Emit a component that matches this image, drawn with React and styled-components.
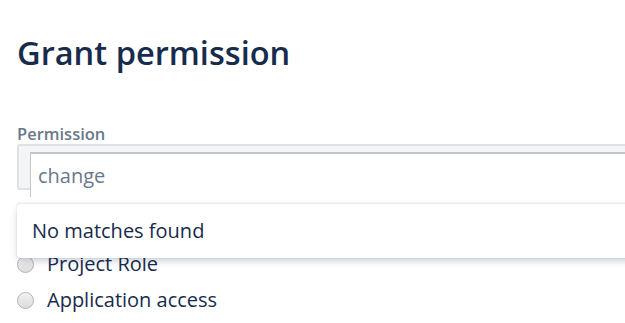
import React from 'react';
import styled, {createGlobalStyle} from 'styled-components';

const GlobalStyle = createGlobalStyle`
  html, body {
    margin: 0;
    padding: 0;
    background: #fff;
  }
  body {
    font-family: "Open Sans", "Noto Sans", Arial, sans-serif;
    color: #172b4d;
  }
`;

const Page = styled.div`
  width: 625px;
  height: 323px;
  overflow: hidden;
  padding-left: 17px;
  box-sizing: border-box;
`;

const Title = styled.h1`
  margin: 33px 0 0;
  font-size: 32.6px;
  line-height: 40px;
  font-weight: 600;
  color: #172b4d;
`;

const Field = styled.div`
  position: relative;
  margin-top: 52px;
`;

const Label = styled.label`
  display: block;
  font-size: 16.5px;
  line-height: 18px;
  font-weight: 600;
  color: #6b778c;
  margin-bottom: 1px;
`;

const SelectBox = styled.div`
  box-sizing: border-box;
  height: 46px;
  width: 640px;
  padding: 6px 0 0 11px;
  background: #f4f5f7;
  border: 2px solid #dfe1e6;
  border-right: none;
  border-radius: 3px 0 0 3px;
`;

const SearchInput = styled.div`
  box-sizing: border-box;
  height: 45px;
  padding: 10px 0 0 7px;
  background: #fff;
  border-top: 2px solid #c1c7d0;
  border-left: 1px solid #c1c7d0;
  font-size: 20px;
  line-height: 24px;
  color: #6b778c;
`;

// dropdown menu lies over the radio list
const Menu = styled.div`
  position: absolute;
  top: 78px;
  left: 0;
  width: 640px;
  height: 55px;
  box-sizing: border-box;
  padding: 15px 0 0 15px;
  background: #fff;
  border-top: 1px solid #ebecf0;
  border-radius: 3px 0 0 3px;
  box-shadow: 0 4px 8px -2px rgba(9, 30, 66, 0.25), 0 0 1px rgba(9, 30, 66, 0.31);
  font-size: 20px;
  line-height: 24px;
  color: #172b4d;
  z-index: 2;
`;

const RadioList = styled.div`
  display: flex;
  flex-direction: column;
  margin-top: 56px;
`;

const RadioRow = styled.label`
  display: flex;
  align-items: center;
  gap: 13px;
  height: 36px;
  font-size: 20px;
  line-height: 24px;
  color: #172b4d;
`;

const RadioDot = styled.span`
  flex: none;
  width: 15px;
  height: 15px;
  border-radius: 50%;
  border: 1px solid #b3b3b3;
  background: linear-gradient(180deg, #f2f2f2 0%, #dcdcdc 100%);
`;

const radios = ['Project Role', 'Application access'];

const App = () => {
  return (
    <React.Fragment>
      <GlobalStyle />
      <Page>
        <Title>Grant permission</Title>
        <Field>
          <Label>Permission</Label>
          <SelectBox>
            <SearchInput>change</SearchInput>
          </SelectBox>
          <Menu>No matches found</Menu>
          <RadioList>
            {radios.map(name => (
              <RadioRow key={name}>
                <RadioDot />
                {name}
              </RadioRow>
            ))}
          </RadioList>
        </Field>
      </Page>
    </React.Fragment>
  );
}

export default App;
